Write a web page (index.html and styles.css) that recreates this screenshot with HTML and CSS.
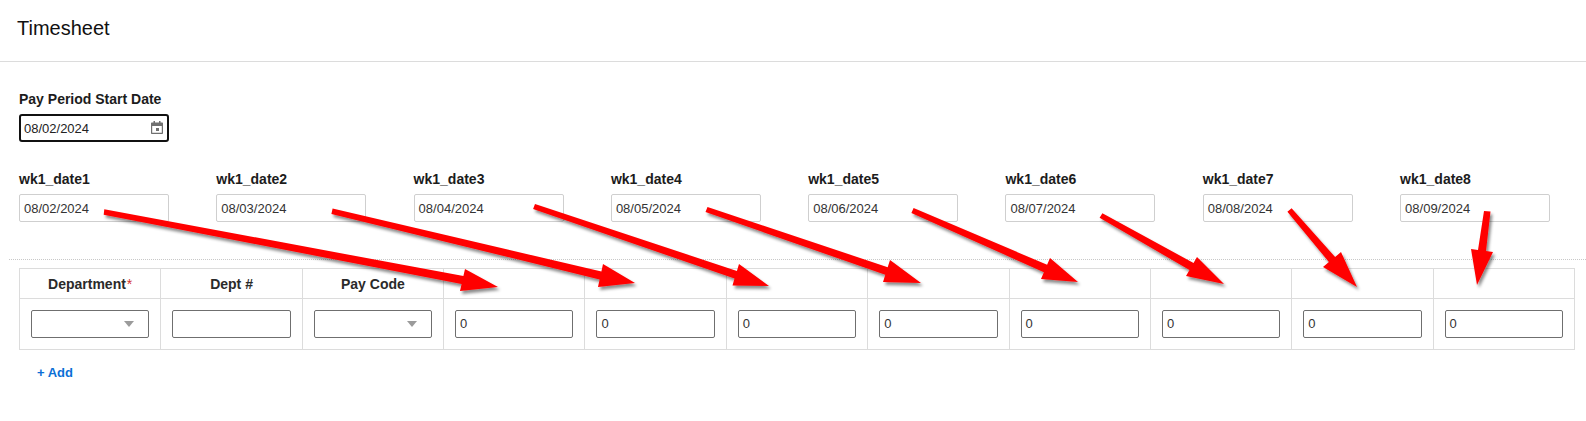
FILE: index.html
```html
<!DOCTYPE html>
<html lang="en">
<head>
<meta charset="utf-8">
<title>Timesheet</title>
<link rel="stylesheet" href="styles.css">
</head>
<body>
<header class="page-header"><h1 class="page-title">Timesheet</h1></header>
<main class="content">
  <div class="start-field">
    <label class="field-label">Pay Period Start Date</label>
    <div class="date-picker">
      <span>08/02/2024</span>
      <svg class="cal-icon" viewBox="0 0 12 13" width="12" height="13" aria-hidden="true"><path fill="#6f6f6f" fill-rule="evenodd" d="M2.500 0H4v1.500h4V0h1.500v1.500H11c.6 0 1 .4 1 1V12c0 .6-.4 1-1 1H1c-.6 0-1-.4-1-1V2.500c0-.6.4-1 1-1h1.500zM1.200 5v6.800h9.600V5zM5 7h3v3H5z"/></svg>
    </div>
  </div>
  <div class="date-row">
    <div class="date-field"><label class="field-label">wk1_date1</label><div class="date-box">08/02/2024</div></div>
    <div class="date-field"><label class="field-label">wk1_date2</label><div class="date-box">08/03/2024</div></div>
    <div class="date-field"><label class="field-label">wk1_date3</label><div class="date-box">08/04/2024</div></div>
    <div class="date-field"><label class="field-label">wk1_date4</label><div class="date-box">08/05/2024</div></div>
    <div class="date-field"><label class="field-label">wk1_date5</label><div class="date-box">08/06/2024</div></div>
    <div class="date-field"><label class="field-label">wk1_date6</label><div class="date-box">08/07/2024</div></div>
    <div class="date-field"><label class="field-label">wk1_date7</label><div class="date-box">08/08/2024</div></div>
    <div class="date-field"><label class="field-label">wk1_date8</label><div class="date-box">08/09/2024</div></div>
  </div>
  <div class="dotted"></div>
  <table class="grid">
    <thead>
      <tr>
        <th>Department<span class="req">*</span></th><th>Dept #</th><th>Pay Code</th>
        <th></th><th></th><th></th><th></th><th></th><th></th><th></th><th></th>
      </tr>
    </thead>
    <tbody>
      <tr>
        <td><div class="ctl select"><i class="caret"></i></div></td>
        <td><div class="ctl"></div></td>
        <td><div class="ctl select"><i class="caret"></i></div></td>
        <td><div class="ctl">0</div></td>
        <td><div class="ctl">0</div></td>
        <td><div class="ctl">0</div></td>
        <td><div class="ctl">0</div></td>
        <td><div class="ctl">0</div></td>
        <td><div class="ctl">0</div></td>
        <td><div class="ctl">0</div></td>
        <td><div class="ctl">0</div></td>
      </tr>
    </tbody>
  </table>
  <a class="add" href="#">+ Add</a>
</main>
<svg class="arrows" width="1586" height="421" viewBox="0 0 1586 421" aria-hidden="true">
  <defs>
    <filter id="sh" x="-20%" y="-20%" width="140%" height="140%">
      <feDropShadow dx="2" dy="3" stdDeviation="1.600" flood-color="#000" flood-opacity="0.45"/>
    </filter>
  </defs>
  <g fill="#ff0000" filter="url(#sh)">
    <polygon points="104.300,209.200 463.400,276.100 465,269 498,287 460,291 461.600,283.900 103.700,214.800"/>
    <polygon points="332.600,208.500 601.400,271.600 603,264 635,283 598,287 599.600,279.400 331.400,214"/>
    <polygon points="535,204 736.900,270.900 739,264 769,286 732.500,285.500 734.500,278.500 533.100,209"/>
    <polygon points="707.500,207 887.700,267.200 890,260 921,283 883,282 885.300,274.800 705.500,212"/>
    <polygon points="913.600,208 1047.100,264.800 1050,258 1078,282 1041,279 1043.900,272.200 911.400,213"/>
    <polygon points="1102.400,213.200 1193.500,263 1197,257 1224,284 1186,276 1189.500,270 1099.600,217.800"/>
    <polygon points="1291.600,208.200 1335.100,257 1341,252 1357,287 1323,267 1328.900,262 1287.400,211.800"/>
    <polygon points="1490.500,211.500 1486,251 1493,252 1477,285 1471,249 1478,250 1484,211"/>
  </g>
</svg>
</body>
</html>
```
FILE: styles.css
```css
* { box-sizing: border-box; }
html, body { margin: 0; padding: 0; }
body {
  position: relative;
  width: 1586px;
  height: 421px;
  overflow: hidden;
  background: #fff;
  font-family: "Liberation Sans", Arial, sans-serif;
  color: #1f1f1f;
}
.page-header {
  height: 62px;
  border-bottom: 1px solid #dcdcdc;
  padding: 16px 0 0 17px;
}
.page-title {
  margin: 0;
  font-size: 20px;
  line-height: 24px;
  font-weight: 400;
  color: #111;
}
.content { padding: 30px 0 0 19px; }
.field-label {
  display: block;
  font-size: 14px;
  line-height: 15px;
  font-weight: 700;
  color: #1c1c1c;
  margin-bottom: 7px;
}
.date-picker {
  width: 150px;
  height: 28px;
  border: 2px solid #111;
  border-radius: 3px;
  display: flex;
  align-items: center;
  justify-content: space-between;
  padding: 0 4px 0 3px;
  font-size: 13px;
  color: #222;
}
.date-row {
  display: flex;
  gap: 47.300px;
  margin-top: 30px;
}
.date-field { width: 150px; flex: none; }
.date-box {
  height: 28px;
  border: 1px solid #cfcfcf;
  border-radius: 2px;
  padding: 0 4px;
  line-height: 27px;
  font-size: 13px;
  color: #333;
}
.dotted {
  margin: 37px 0 0 -10px;
  border-top: 1px dotted #c8c8c8;
}
.grid {
  margin-top: 8px;
  width: 1556px;
  table-layout: fixed;
  border-collapse: collapse;
  font-size: 14px;
}
.grid th, .grid td { border: 1px solid #dcdcdc; padding: 0; }
.grid th {
  height: 30px;
  font-weight: 700;
  color: #2a2a2a;
  text-align: center;
}
.grid td { height: 51px; padding: 0 11px; }
.req { color: #d32f2f; margin-left: 1px; font-weight: 400; }
.ctl {
  position: relative;
  height: 28px;
  border: 1px solid #6f6f6f;
  border-radius: 2px;
  padding: 0 4px;
  line-height: 26px;
  font-size: 13px;
  color: #333;
}
.caret {
  position: absolute;
  right: 14px;
  top: 10px;
  width: 0;
  height: 0;
  border-left: 5px solid transparent;
  border-right: 5px solid transparent;
  border-top: 6px solid #9b9b9b;
}
.add {
  display: inline-block;
  margin: 15px 0 0 18px;
  font-size: 13px;
  line-height: 15px;
  font-weight: 700;
  color: #0b6fd6;
  text-decoration: none;
}
.cal-icon { display: block; margin-bottom: 2px; }
.arrows { position: absolute; left: 0; top: 0; pointer-events: none; }
```
